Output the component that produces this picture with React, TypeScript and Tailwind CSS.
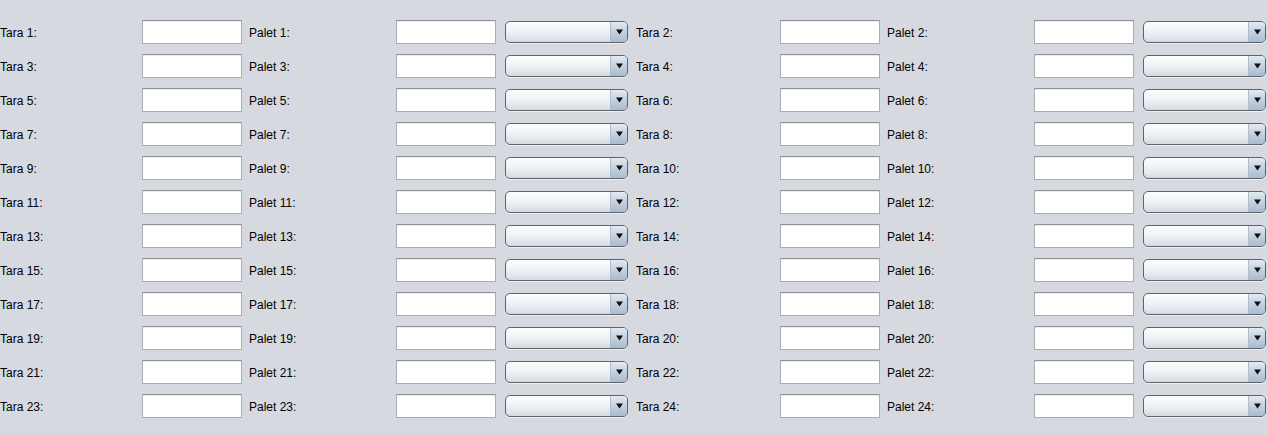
import React from "react";

function Field() {
  return (
    <div className="w-[100px] h-[24px] shrink-0 bg-white border border-[#a9acb1] border-t-[#8f9297] shadow-[inset_0_1px_0_#e9eaec]" />
  );
}

function Combo() {
  return (
    <div className="w-[123px] h-[22px] shrink-0 rounded-[5px] border border-[#5e646c] flex overflow-hidden bg-[linear-gradient(to_bottom,#fdfdfe_0%,#f0f2f5_45%,#e1e5ea_80%,#d3d8df_100%)] shadow-[0_1px_0_#eef0f3]">
      <div className="flex-1" />
      <div className="w-[17px] h-full border-l border-[#b0bccb] flex items-center justify-center bg-[linear-gradient(to_bottom,#e3eaf2_0%,#c7d3e0_45%,#a9bbcf_100%)]">
        <svg width="7" height="6" viewBox="0 0 7 6">
          <polygon points="0,0.5 7,0.5 3.5,5.5" fill="#111" />
        </svg>
      </div>
    </div>
  );
}

function Half({ t, p, taraW }: { t: number; p: number; taraW: string }) {
  return (
    <div className="flex items-center h-[24px]">
      <div className={`${taraW} shrink-0 pt-[2px]`}>Tara {t}:</div>
      <Field />
      <div className="ml-[7px] w-[147px] shrink-0 pt-[2px]">Palet {p}:</div>
      <Field />
      <div className="ml-[9px]">
        <Combo />
      </div>
    </div>
  );
}

export default function App() {
  const rows = Array.from({ length: 12 }, (_, i) => i);
  return (
    <div
      className="w-[1268px] h-[435px] bg-[#d6d9df] text-[12px] text-black pt-[20px] flex flex-col gap-[10px]"
      style={{ fontFamily: '"Liberation Sans", Arial, sans-serif' }}
    >
      {rows.map((i) => {
        const a = i * 2 + 1;
        const b = i * 2 + 2;
        return (
          <div key={i} className="flex items-center">
            <Half t={a} p={a} taraW="w-[142px]" />
            <div className="ml-[8px]">
              <Half t={b} p={b} taraW="w-[144px]" />
            </div>
          </div>
        );
      })}
    </div>
  );
}
